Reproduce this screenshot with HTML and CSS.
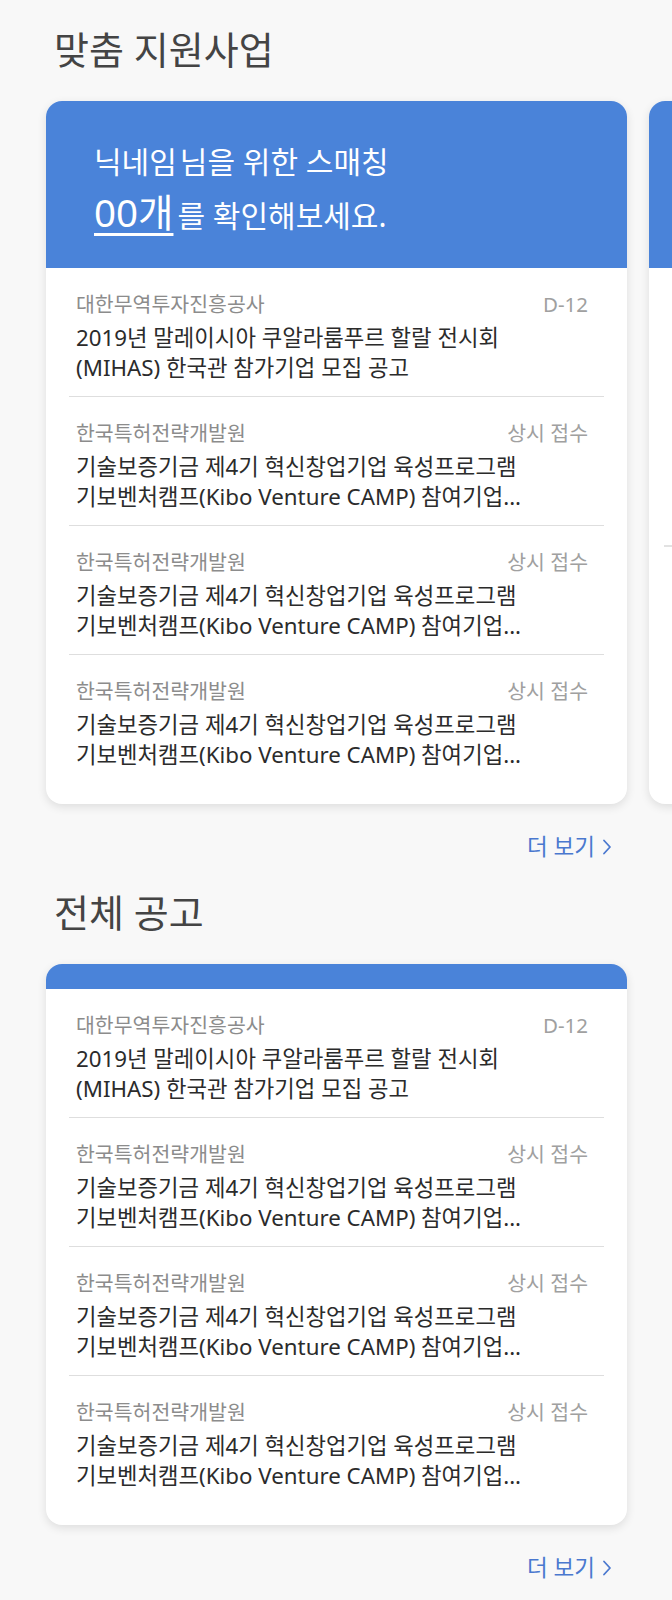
FILE: index.html
```html
<!DOCTYPE html>
<html lang="ko">
<head>
<meta charset="utf-8">
<title>맞춤 지원사업</title>
<link rel="stylesheet" href="styles.css">
</head>
<body>
<main class="page">
  <section class="section">
    <h2 class="section-title">맞춤 지원사업</h2>
    <div class="card-row">
      <article class="card">
        <div class="card-hero">
          <p class="hero-line1"><span class="nick">닉네임</span>님을 위한 스매칭</p>
          <p class="hero-line2"><span class="count">00개</span>를 확인해보세요.</p>
        </div>
        <ul class="list">
          <li class="item">
            <div class="item-meta"><span class="org">대한무역투자진흥공사</span><span class="due">D-12</span></div>
            <p class="item-title">2019년 말레이시아 쿠알라룸푸르 할랄 전시회<br>(MIHAS) 한국관 참가기업 모집 공고</p>
          </li>
          <li class="item">
            <div class="item-meta"><span class="org">한국특허전략개발원</span><span class="due">상시 접수</span></div>
            <p class="item-title">기술보증기금 제4기 혁신창업기업 육성프로그램<br>기보벤처캠프(Kibo Venture CAMP) 참여기업...</p>
          </li>
          <li class="item">
            <div class="item-meta"><span class="org">한국특허전략개발원</span><span class="due">상시 접수</span></div>
            <p class="item-title">기술보증기금 제4기 혁신창업기업 육성프로그램<br>기보벤처캠프(Kibo Venture CAMP) 참여기업...</p>
          </li>
          <li class="item">
            <div class="item-meta"><span class="org">한국특허전략개발원</span><span class="due">상시 접수</span></div>
            <p class="item-title">기술보증기금 제4기 혁신창업기업 육성프로그램<br>기보벤처캠프(Kibo Venture CAMP) 참여기업...</p>
          </li>
        </ul>
      </article>
      <article class="card">
        <div class="card-hero"></div>
        <div class="peek-body"><div class="peek-item"></div></div>
      </article>
    </div>
    <div class="more-row"><a class="more" href="#">더 보기 <svg class="chev" width="10" height="16" viewBox="0 0 10 16"><path d="M2 1.5 L8 8 L2 14.5" fill="none" stroke="currentColor" stroke-width="1.8" stroke-linecap="round" stroke-linejoin="round"/></svg></a></div>
  </section>

  <section class="section">
    <h2 class="section-title">전체 공고</h2>
    <article class="card card-solo">
      <div class="card-strip"></div>
      <ul class="list">
        <li class="item">
          <div class="item-meta"><span class="org">대한무역투자진흥공사</span><span class="due">D-12</span></div>
          <p class="item-title">2019년 말레이시아 쿠알라룸푸르 할랄 전시회<br>(MIHAS) 한국관 참가기업 모집 공고</p>
        </li>
        <li class="item">
          <div class="item-meta"><span class="org">한국특허전략개발원</span><span class="due">상시 접수</span></div>
          <p class="item-title">기술보증기금 제4기 혁신창업기업 육성프로그램<br>기보벤처캠프(Kibo Venture CAMP) 참여기업...</p>
        </li>
        <li class="item">
          <div class="item-meta"><span class="org">한국특허전략개발원</span><span class="due">상시 접수</span></div>
          <p class="item-title">기술보증기금 제4기 혁신창업기업 육성프로그램<br>기보벤처캠프(Kibo Venture CAMP) 참여기업...</p>
        </li>
        <li class="item">
          <div class="item-meta"><span class="org">한국특허전략개발원</span><span class="due">상시 접수</span></div>
          <p class="item-title">기술보증기금 제4기 혁신창업기업 육성프로그램<br>기보벤처캠프(Kibo Venture CAMP) 참여기업...</p>
        </li>
      </ul>
    </article>
    <div class="more-row"><a class="more" href="#">더 보기 <svg class="chev" width="10" height="16" viewBox="0 0 10 16"><path d="M2 1.5 L8 8 L2 14.5" fill="none" stroke="currentColor" stroke-width="1.8" stroke-linecap="round" stroke-linejoin="round"/></svg></a></div>
  </section>
</main>
</body>
</html>
```

FILE: styles.css
```css
* { box-sizing: border-box; }
html, body {
  margin: 0;
  padding: 0;
  background: #f8f8f8;
}
body {
  font-family: "Noto Sans", "Noto Sans CJK KR", sans-serif;
  color: #333;
  overflow: hidden;
}
.page {
  width: 672px;
  padding-top: 25px;
}
.section {
  padding-left: 46px;
}
.section-title {
  margin: 0;
  padding-left: 8px;
  font-size: 38px;
  line-height: 48px;
  font-weight: 400;
  color: #444;
}
.card-row {
  display: flex;
  gap: 22px;
  margin-top: 28px;
}
.card {
  flex: 0 0 581px;
  width: 581px;
  background: #fff;
  border-radius: 16px;
  overflow: hidden;
  box-shadow: 0 3px 10px rgba(0, 0, 0, 0.11);
}
.card-solo {
  margin-top: 28px;
}
.card-hero {
  height: 167px;
  background: #4a83d9;
  padding: 43px 48px 0;
  color: #fff;
}
.hero-line1 {
  margin: 0;
  font-size: 30px;
  line-height: 36px;
  font-weight: 400;
}
.nick {
  margin-right: 3px;
}
.hero-line2 {
  margin: 10px 0 0;
  font-size: 30px;
  line-height: 44px;
}
.count {
  font-size: 38.5px;
  margin-right: 4px;
  text-decoration: underline;
  text-decoration-thickness: 3px;
  text-underline-offset: 6px;
}
.card-strip {
  height: 25px;
  background: #4a83d9;
}
.list {
  list-style: none;
  margin: 0;
  padding: 0 23px 21px;
}
.item {
  padding: 22.5px 16px 13px 7px;
  border-bottom: 1px solid #dedede;
}
.item:last-child {
  border-bottom: none;
}
.item-meta {
  display: flex;
  justify-content: space-between;
  font-size: 20.5px;
  line-height: 26px;
  color: #8c8c8c;
}
.due {
  color: #a0a0a0;
}
.item-title {
  margin: 6.5px 0 0;
  font-size: 22.3px;
  line-height: 30px;
  color: #2b2b2b;
}
.peek-body {
  padding-left: 15px;
}
.peek-item {
  height: 279px;
  border-bottom: 2px solid #e2e2e2;
}
.more-row {
  display: flex;
  justify-content: flex-end;
  width: 566px;
  margin-top: 28px;
  margin-bottom: 26px;
}
.more {
  display: flex;
  align-items: center;
  gap: 7px;
  font-size: 22.5px;
  line-height: 30px;
  color: #4a78cf;
  text-decoration: none;
}
.chev {
  display: block;
}
```
